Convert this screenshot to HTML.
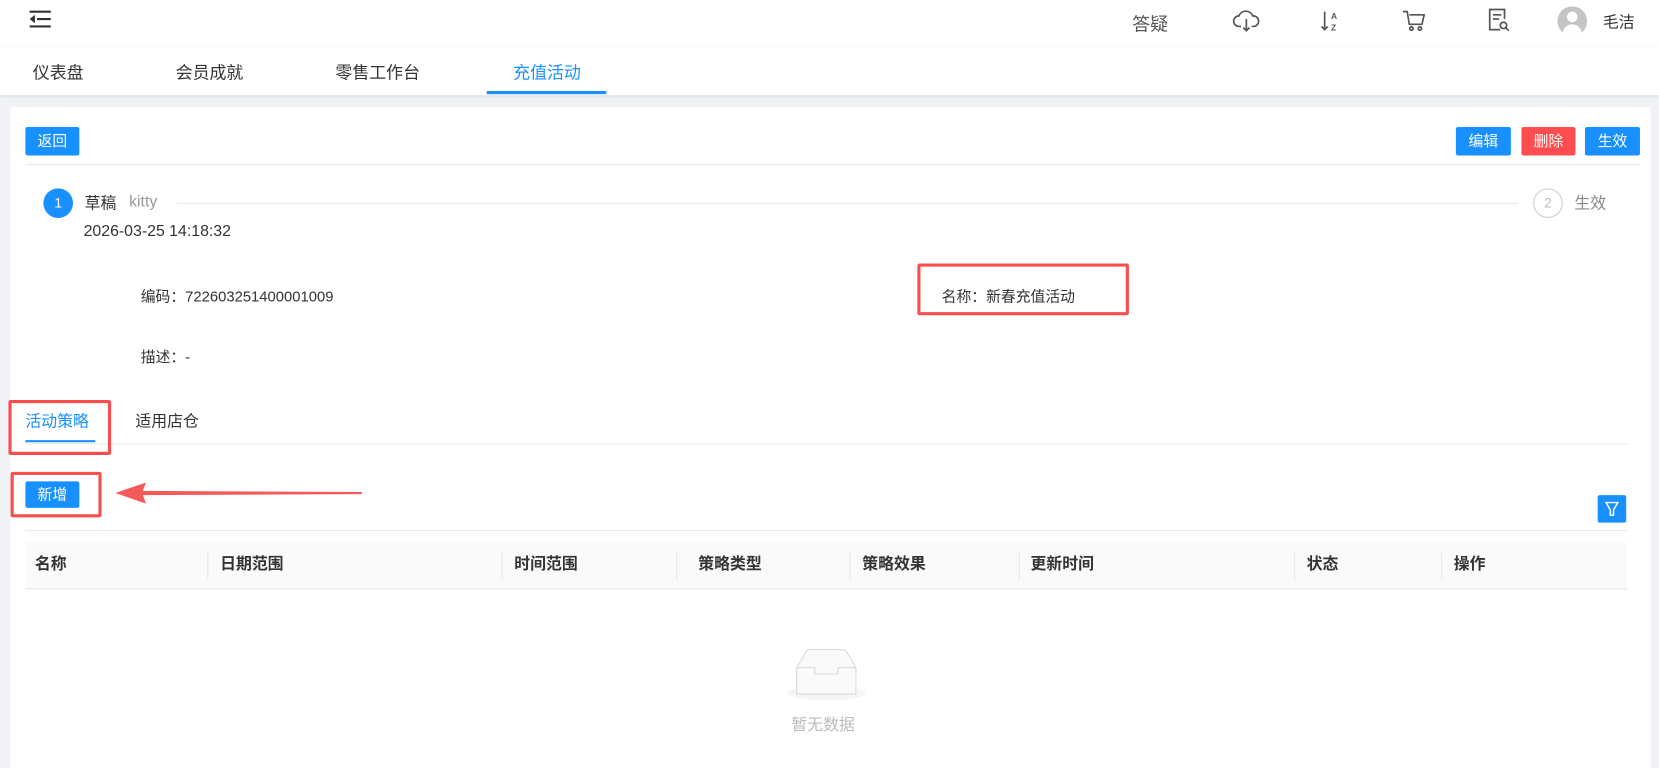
<!DOCTYPE html>
<html><head><meta charset="utf-8"><style>
*{margin:0;padding:0;box-sizing:border-box}
html,body{width:1659px;height:768px;overflow:hidden;background:#f0f2f5}
#w{width:1568px;height:726px;transform:scale(1.05804);transform-origin:0 0;position:relative;font-family:"Liberation Sans","Noto Sans CJK SC",sans-serif;font-size:14px;color:#333}
.a{position:absolute;white-space:nowrap}
.btn{position:absolute;background:#1890ff;color:#fff;border-radius:2px;text-align:center;font-size:14px}
.red{position:absolute;border:3px solid #f5504f;border-radius:2px}
</style></head><body><div id="w">
<div class="a" style="left:0;top:0;width:1568px;height:44px;background:#fff;box-shadow:0 1px 4px rgba(0,0,0,.08)"></div>
<svg class="a" style="left:26px;top:9px" width="24" height="18" viewBox="0 0 24 18"><g stroke="#333" stroke-width="2"><line x1="2" y1="2" x2="22" y2="2"/><line x1="9" y1="9" x2="22" y2="9"/><line x1="2" y1="16" x2="22" y2="16"/></g><path d="M7 5 L2 9 L7 13Z" fill="#333"/></svg>
<div class="a" style="left:1070px;top:9px;font-size:17px;color:#555">答疑</div>
<svg class="a" style="left:1165px;top:9px" width="26" height="22" viewBox="0 0 26 22" fill="none" stroke="#555" stroke-width="1.6"><path d="M8 16H6a5 5 0 0 1 0-10 7 7 0 0 1 13 0 5 5 0 0 1 1 10h-2"/><path d="M13 9v11M10 17l3 3 3-3"/></svg>
<svg class="a" style="left:1247px;top:8px" width="22" height="24" viewBox="0 0 22 24"><path d="M5 3v17M2 17l3 3 3-3" stroke="#555" stroke-width="1.6" fill="none"/><text x="11" y="10" font-size="8" font-family="Liberation Sans" font-weight="bold" fill="#555">A</text><text x="11" y="21" font-size="8" font-family="Liberation Sans" font-weight="bold" fill="#555">Z</text></svg>
<svg class="a" style="left:1325px;top:9px" width="24" height="22" viewBox="0 0 24 22" fill="none" stroke="#555" stroke-width="1.6"><path d="M1 2h4l2 12h12l2-9H7"/><circle cx="9" cy="18" r="1.6"/><circle cx="17" cy="18" r="1.6"/></svg>
<svg class="a" style="left:1405px;top:7px" width="24" height="24" viewBox="0 0 24 24" fill="none" stroke="#555" stroke-width="1.6"><path d="M13 21H3V2h14v9"/><path d="M6 7h8M6 11h6"/><circle cx="16" cy="17" r="3"/><path d="M18 19l3 3"/></svg>
<div class="a" style="left:1472px;top:6px;width:28px;height:28px;border-radius:50%;background:#c4c4c4;overflow:hidden"><div class="a" style="left:9px;top:5px;width:10px;height:10px;border-radius:50%;background:#fff"></div><div class="a" style="left:5px;top:17px;width:18px;height:14px;border-radius:9px 9px 0 0;background:#fff"></div></div>
<div class="a" style="left:1515px;top:10px;font-size:15px">毛洁</div>

<div class="a" style="left:0;top:44px;width:1568px;height:46px;background:#fff;box-shadow:0 1px 3px rgba(0,0,0,.1)"></div>
<div class="a" style="left:31px;top:55px;font-size:16px">仪表盘</div>
<div class="a" style="left:166px;top:55px;font-size:16px">会员成就</div>
<div class="a" style="left:317px;top:55px;font-size:16px">零售工作台</div>
<div class="a" style="left:485px;top:55px;font-size:16px;color:#1890ff">充值活动</div>
<div class="a" style="left:460px;top:86px;width:113px;height:3px;background:#1890ff"></div>

<div class="a" style="left:10px;top:101px;width:1550px;height:625px;background:#fff"></div>
<div class="btn" style="left:24px;top:120px;width:51px;height:27px;line-height:26px">返回</div>
<div class="btn" style="left:1376px;top:120px;width:52px;height:27px;line-height:26px">编辑</div>
<div class="btn" style="left:1438px;top:120px;width:51px;height:27px;line-height:26px;background:#ff4d4f">删除</div>
<div class="btn" style="left:1498px;top:120px;width:52px;height:27px;line-height:26px">生效</div>
<div class="a" style="left:24px;top:155px;width:1526px;height:1px;background:#e8e8e8"></div>

<div class="a" style="left:41px;top:178px;width:28px;height:28px;border-radius:50%;background:#1890ff;color:#fff;text-align:center;line-height:28px;font-size:13px">1</div>
<div class="a" style="left:80px;top:181px;font-size:15px">草稿</div>
<div class="a" style="left:122px;top:182px;font-size:15px;color:#999">kitty</div>
<div class="a" style="left:167px;top:192px;width:1268px;height:1px;background:#e8e8e8"></div>
<div class="a" style="left:1449px;top:178px;width:28px;height:28px;border-radius:50%;border:1px solid #ccc;color:#bbb;text-align:center;line-height:26px;font-size:13px">2</div>
<div class="a" style="left:1488px;top:181px;font-size:15px;color:#888">生效</div>
<div class="a" style="left:79px;top:210px;font-size:15px">2026-03-25 14:18:32</div>

<div class="a" style="left:133px;top:270px">编码：722603251400001009</div>
<div class="a" style="left:890px;top:270px">名称：新春充值活动</div>
<div class="red" style="left:867px;top:249px;width:200px;height:49px"></div>
<div class="a" style="left:133px;top:327px">描述：-</div>

<div class="a" style="left:24px;top:387px;font-size:15px;color:#1890ff">活动策略</div>
<div class="a" style="left:128px;top:387px;font-size:15px">适用店仓</div>
<div class="a" style="left:24px;top:419px;width:1514px;height:1px;background:#e8e8e8"></div>
<div class="a" style="left:24px;top:416px;width:66px;height:2px;background:#1890ff"></div>
<div class="red" style="left:8px;top:378px;width:97px;height:52px"></div>

<div class="btn" style="left:24px;top:455px;width:51px;height:25px;line-height:24px">新增</div>
<div class="red" style="left:10px;top:446px;width:86px;height:43px"></div>
<svg class="a" style="left:105px;top:454px" width="240" height="24" viewBox="0 0 240 24"><path d="M4 12 L33 2 L30 10 L237 11 L237 13 L30 14 L33 22Z" fill="#f55a5a"/></svg>
<div class="btn" style="left:1510px;top:468px;width:27px;height:26px"><svg width="27" height="26" viewBox="0 0 27 26" fill="none" stroke="#fff" stroke-width="1.4"><path d="M8 7h11l-4 7v5h-3v-5z"/></svg></div>
<div class="a" style="left:24px;top:501px;width:1514px;height:1px;background:#e8e8e8"></div>

<div class="a" style="left:24px;top:512px;width:1514px;height:45px;background:#fafafa;border-bottom:1px solid #e8e8e8"></div>
<div class="a" style="left:33px;top:522px;font-weight:bold;font-size:15px">名称</div>
<div class="a" style="left:208px;top:522px;font-weight:bold;font-size:15px">日期范围</div>
<div class="a" style="left:486px;top:522px;font-weight:bold;font-size:15px">时间范围</div>
<div class="a" style="left:660px;top:522px;font-weight:bold;font-size:15px">策略类型</div>
<div class="a" style="left:815px;top:522px;font-weight:bold;font-size:15px">策略效果</div>
<div class="a" style="left:974px;top:522px;font-weight:bold;font-size:15px">更新时间</div>
<div class="a" style="left:1235px;top:522px;font-weight:bold;font-size:15px">状态</div>
<div class="a" style="left:1374px;top:522px;font-weight:bold;font-size:15px">操作</div>
<div class="a" style="left:196px;top:522px;width:1px;height:26px;background:#e8e8e8"></div>
<div class="a" style="left:474px;top:522px;width:1px;height:26px;background:#e8e8e8"></div>
<div class="a" style="left:639px;top:522px;width:1px;height:26px;background:#e8e8e8"></div>
<div class="a" style="left:803px;top:522px;width:1px;height:26px;background:#e8e8e8"></div>
<div class="a" style="left:963px;top:522px;width:1px;height:26px;background:#e8e8e8"></div>
<div class="a" style="left:1223px;top:522px;width:1px;height:26px;background:#e8e8e8"></div>
<div class="a" style="left:1362px;top:522px;width:1px;height:26px;background:#e8e8e8"></div>

<svg class="a" style="left:742px;top:612px" width="78" height="52" viewBox="0 0 78 52"><ellipse cx="39" cy="43" rx="37" ry="7" fill="#f5f5f5"/><path d="M11 44V19L21 2h36l10 17v25z" fill="#fafafa" stroke="#d9d9d9"/><path d="M11 19h17v6h22v-6h17" fill="none" stroke="#d9d9d9"/></svg>
<div class="a" style="left:748px;top:674px;color:#bbb;font-size:15px">暂无数据</div>
</div></body></html>
